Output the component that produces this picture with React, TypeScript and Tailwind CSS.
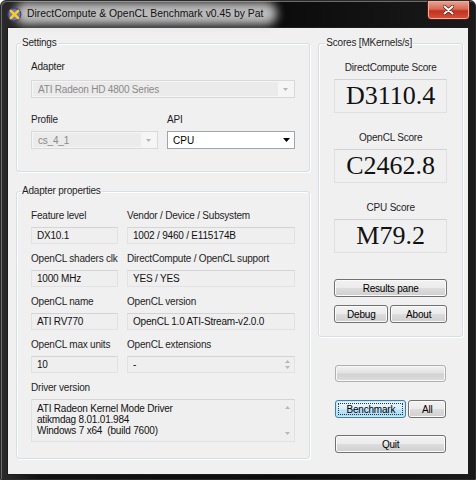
import type { ReactNode } from 'react';

// Win7-style benchmark dialog: aero frame, two group columns, score panel and buttons.

function Arrow({ dir = 'down', color = '#000', w = 7 }: { dir?: 'up' | 'down'; color?: string; w?: number }) {
  const h = Math.ceil(w / 2);
  return (
    <svg width={w} height={h} viewBox={`0 0 ${w} ${h}`}>
      {dir === 'down' ? (
        <polygon points={`0,0 ${w},0 ${w / 2},${h}`} fill={color} />
      ) : (
        <polygon points={`0,${h} ${w},${h} ${w / 2},0`} fill={color} />
      )}
    </svg>
  );
}

function GroupBox({ title, className, legendClass, children }: { title: string; className?: string; legendClass?: string; children: ReactNode }) {
  return (
    <fieldset className={`rounded-[3px] border border-[#d5dfe5] shadow-[inset_1px_1px_0_#ffffff,1px_1px_0_#ffffff] ${className ?? ''}`}>
      <legend className={`px-[1px] text-[10px] leading-[12px] tracking-[-0.2px] text-[#1e1e1e] ${legendClass ?? ''}`}>{title}</legend>
      {children}
    </fieldset>
  );
}

function Label({ children, className }: { children: ReactNode; className?: string }) {
  return <div className={`h-[12px] text-[10px] leading-[12px] tracking-[-0.2px] text-[#1e1e1e] whitespace-nowrap ${className ?? ''}`}>{children}</div>;
}

function Combo({ value, disabled }: { value: string; disabled?: boolean }) {
  if (disabled) {
    return (
      <div className="flex h-[18px] border border-[#d9d9d9] bg-[#f5f5f5] p-[1px]">
        <div className="flex flex-1 items-center bg-[#ebebeb] pl-[5px] text-[10px] tracking-[-0.2px] text-[#8a8a8a]">{value}</div>
        <div className="flex w-[15px] items-center justify-center">
          <Arrow color="#b4b4b4" w={5} />
        </div>
      </div>
    );
  }
  return (
    <div className="flex h-[18px] border border-[#9ea5ad] bg-white">
      <div className="flex flex-1 items-center pl-[5px] text-[10px] text-black">{value}</div>
      <div className="flex w-[16px] items-center justify-center">
        <Arrow w={7} />
      </div>
    </div>
  );
}

function ReadBox({ value, className, children }: { value: string; className?: string; children?: ReactNode }) {
  return (
    <div className={`flex h-[17px] items-center border border-[#e2e2e2] border-t-[#d4d4d4] bg-[#efefef] pl-[5px] text-[10px] tracking-[-0.2px] text-[#111] ${className ?? ''}`}>
      <span className="flex-1 whitespace-nowrap">{value}</span>
      {children}
    </div>
  );
}

function ScoreBox({ label, value }: { label: string; value: string }) {
  return (
    <div className="flex flex-col items-center">
      <Label className="mb-[5px]">{label}</Label>
      <div className="flex h-[34px] w-full items-center justify-center border border-[#e0e0e0] border-t-[#d2d2d2] bg-[#f0f0f0] font-['Liberation_Serif','Times_New_Roman',serif] text-[26px] leading-none text-[#111]">
        {value}
      </div>
    </div>
  );
}

function Button({ children, className, focused }: { children: ReactNode; className?: string; focused?: boolean }) {
  if (focused) {
    return (
      <button className={`flex h-[18px] items-center justify-center rounded-[3px] border border-[#3c7fb1] bg-[linear-gradient(#eaf6fd_0%,#d9f0fc_50%,#bee6fd_50%,#a7d9f5_100%)] p-[2px] text-[10px] tracking-[-0.2px] text-black shadow-[inset_0_0_0_1px_#c6e8f9] ${className ?? ''}`}>
        <span className="flex h-full w-full items-center justify-center border border-dotted border-[#333]">{children}</span>
      </button>
    );
  }
  return (
    <button className={`flex h-[18px] items-center justify-center rounded-[3px] border border-[#707070] bg-[linear-gradient(#f2f2f2_0%,#ebebeb_50%,#dddddd_50%,#cfcfcf_100%)] text-[10px] tracking-[-0.2px] text-black shadow-[inset_0_0_0_1px_#fbfbfb] ${className ?? ''}`}>
      {children}
    </button>
  );
}

function AppIcon() {
  return (
    <svg width="15" height="15" viewBox="0 0 15 15">
      <circle cx="7.5" cy="7.5" r="7" fill="#4a4688" />
      <circle cx="7.5" cy="7.5" r="5.6" fill="#7672b8" />
      <path d="M3.8 3.8 L11.2 11.2 M11.2 3.8 L3.8 11.2" stroke="#f4d21c" strokeWidth="2.6" strokeLinecap="round" />
    </svg>
  );
}

export default function App() {
  return (
    <div className="relative flex h-[480px] w-[476px] flex-col overflow-hidden rounded-t-[6px] border border-[#2a2a2a] bg-[linear-gradient(90deg,#2b2b2b_0%,#121212_8%,#0c0c0c_60%,#1a1a1a_100%)] font-['Liberation_Sans',Arial,sans-serif] shadow-[inset_1px_1px_0_#6b6b6b]">
      {/* title bar */}
      <div className="relative flex h-[26px] shrink-0 items-center pl-[6px]">
        <div className="absolute left-[14px] top-[1px] h-[23px] w-[262px] rounded-full bg-[#cfcfcf] opacity-90 blur-[5px]" />
        <div className="relative flex items-center gap-[5px]">
          <AppIcon />
          <span className="text-[10.4px] leading-none text-[#111]">DirectCompute &amp; OpenCL Benchmark v0.45 by Pat</span>
        </div>
        <div className="absolute right-[5px] top-[-1px] flex h-[20px] w-[43px] items-center justify-center rounded-b-[4px] border border-[#5a140e] bg-[linear-gradient(#e9a494_0%,#d86a55_45%,#c0321e_55%,#d4533c_100%)] shadow-[inset_0_0_0_1px_#f0b0a0]">
          <svg width="11" height="10" viewBox="0 0 11 10">
            <path d="M1.5 1.5 L9.5 8.5 M9.5 1.5 L1.5 8.5" stroke="#5a1a10" strokeWidth="3.4" strokeLinecap="round" />
            <path d="M1.5 1.5 L9.5 8.5 M9.5 1.5 L1.5 8.5" stroke="#ffffff" strokeWidth="2" strokeLinecap="round" />
          </svg>
        </div>
      </div>

      {/* client area */}
      <div className="mx-[6px] mb-[6px] flex flex-1 gap-[8px] border border-[#1c1c1c] bg-[#f0f0f0] pb-[15px] pl-[8px] pr-[5px] pt-[9px]">
        {/* left column */}
        <div className="flex w-[295px] flex-col">
          <GroupBox title="Settings" className="px-[14px] pb-[22px] pt-[12px]" legendClass="-ml-[10px]">
            <Label className="mb-[7px]">Adapter</Label>
            <Combo value="ATI Radeon HD 4800 Series" disabled />
            <div className="mt-[16px] grid grid-cols-[127px_1fr] gap-x-[9px]">
              <div>
                <Label className="mb-[5px]">Profile</Label>
                <Combo value="cs_4_1" disabled />
              </div>
              <div>
                <Label className="mb-[5px]">API</Label>
                <Combo value="CPU" />
              </div>
            </div>
          </GroupBox>

          <GroupBox title="Adapter properties" className="mt-[13px] px-[14px] pb-[16px] pt-[13px]" legendClass="-ml-[10px]">
            <div className="grid grid-cols-[87px_1fr] gap-x-[9px] gap-y-[9px]">
              <div>
                <Label className="mb-[5px]">Feature level</Label>
                <ReadBox value="DX10.1" />
              </div>
              <div>
                <Label className="mb-[5px]">Vendor / Device / Subsystem</Label>
                <ReadBox value="1002 / 9460 / E115174B" />
              </div>
              <div>
                <Label className="mb-[5px]">OpenCL shaders clk</Label>
                <ReadBox value="1000 MHz" />
              </div>
              <div>
                <Label className="mb-[5px]">DirectCompute / OpenCL support</Label>
                <ReadBox value="YES / YES" />
              </div>
              <div>
                <Label className="mb-[5px]">OpenCL name</Label>
                <ReadBox value="ATI RV770" />
              </div>
              <div>
                <Label className="mb-[5px]">OpenCL version</Label>
                <ReadBox value="OpenCL 1.0 ATI-Stream-v2.0.0" />
              </div>
              <div>
                <Label className="mb-[5px]">OpenCL max units</Label>
                <ReadBox value="10" />
              </div>
              <div>
                <Label className="mb-[5px]">OpenCL extensions</Label>
                <ReadBox value="-">
                  <div className="flex w-[14px] flex-col items-center gap-[3px]">
                    <Arrow dir="up" color="#b8b8b8" w={5} />
                    <Arrow dir="down" color="#b8b8b8" w={5} />
                  </div>
                </ReadBox>
              </div>
              <div className="col-span-2">
                <Label className="mb-[5px]">Driver version</Label>
                <div className="flex h-[43px] border border-[#e2e2e2] border-t-[#d4d4d4] bg-[#efefef]">
                  <div className="flex-1 pl-[5px] pt-[3px] text-[10px] leading-[11px] tracking-[-0.2px] text-[#111]">
                    <div>ATI Radeon Kernel Mode Driver</div>
                    <div>atikmdag 8.01.01.984</div>
                    <div>Windows 7 x64&nbsp; (build 7600)</div>
                  </div>
                  <div className="flex w-[14px] flex-col items-center justify-between py-[6px]">
                    <Arrow dir="up" color="#b8b8b8" w={5} />
                    <Arrow dir="down" color="#b8b8b8" w={5} />
                  </div>
                </div>
              </div>
            </div>
          </GroupBox>
        </div>

        {/* right column */}
        <div className="flex w-[145px] flex-col">
          <GroupBox title="Scores [MKernels/s]" className="px-[15px] pb-[13px] pt-[13px]" legendClass="-ml-[9px]">
            <ScoreBox label="DirectCompute Score" value="D3110.4" />
            <div className="mt-[19px]">
              <ScoreBox label="OpenCL Score" value="C2462.8" />
            </div>
            <div className="mt-[19px]">
              <ScoreBox label="CPU Score" value="M79.2" />
            </div>
            <Button className="mt-[26px] w-full">Results pane</Button>
            <div className="mt-[8px] flex gap-[2px]">
              <Button className="w-[54px]">Debug</Button>
              <Button className="flex-1">About</Button>
            </div>
          </GroupBox>

          <div className="px-[17px]">
            <div className="mt-[28px] h-[17px] rounded-[3px] border border-[#b0b0b0] bg-[linear-gradient(#f2f2f2_0%,#e2e2e2_45%,#d2d2d2_55%,#dcdcdc_100%)] shadow-[inset_0_0_0_1px_#f7f7f7]" />
            <div className="mt-[18px] flex gap-[2px]">
              <Button focused className="w-[71px]">Benchmark</Button>
              <Button className="flex-1">All</Button>
            </div>
            <Button className="mt-[17px] w-full">Quit</Button>
          </div>
        </div>
      </div>
    </div>
  );
}
